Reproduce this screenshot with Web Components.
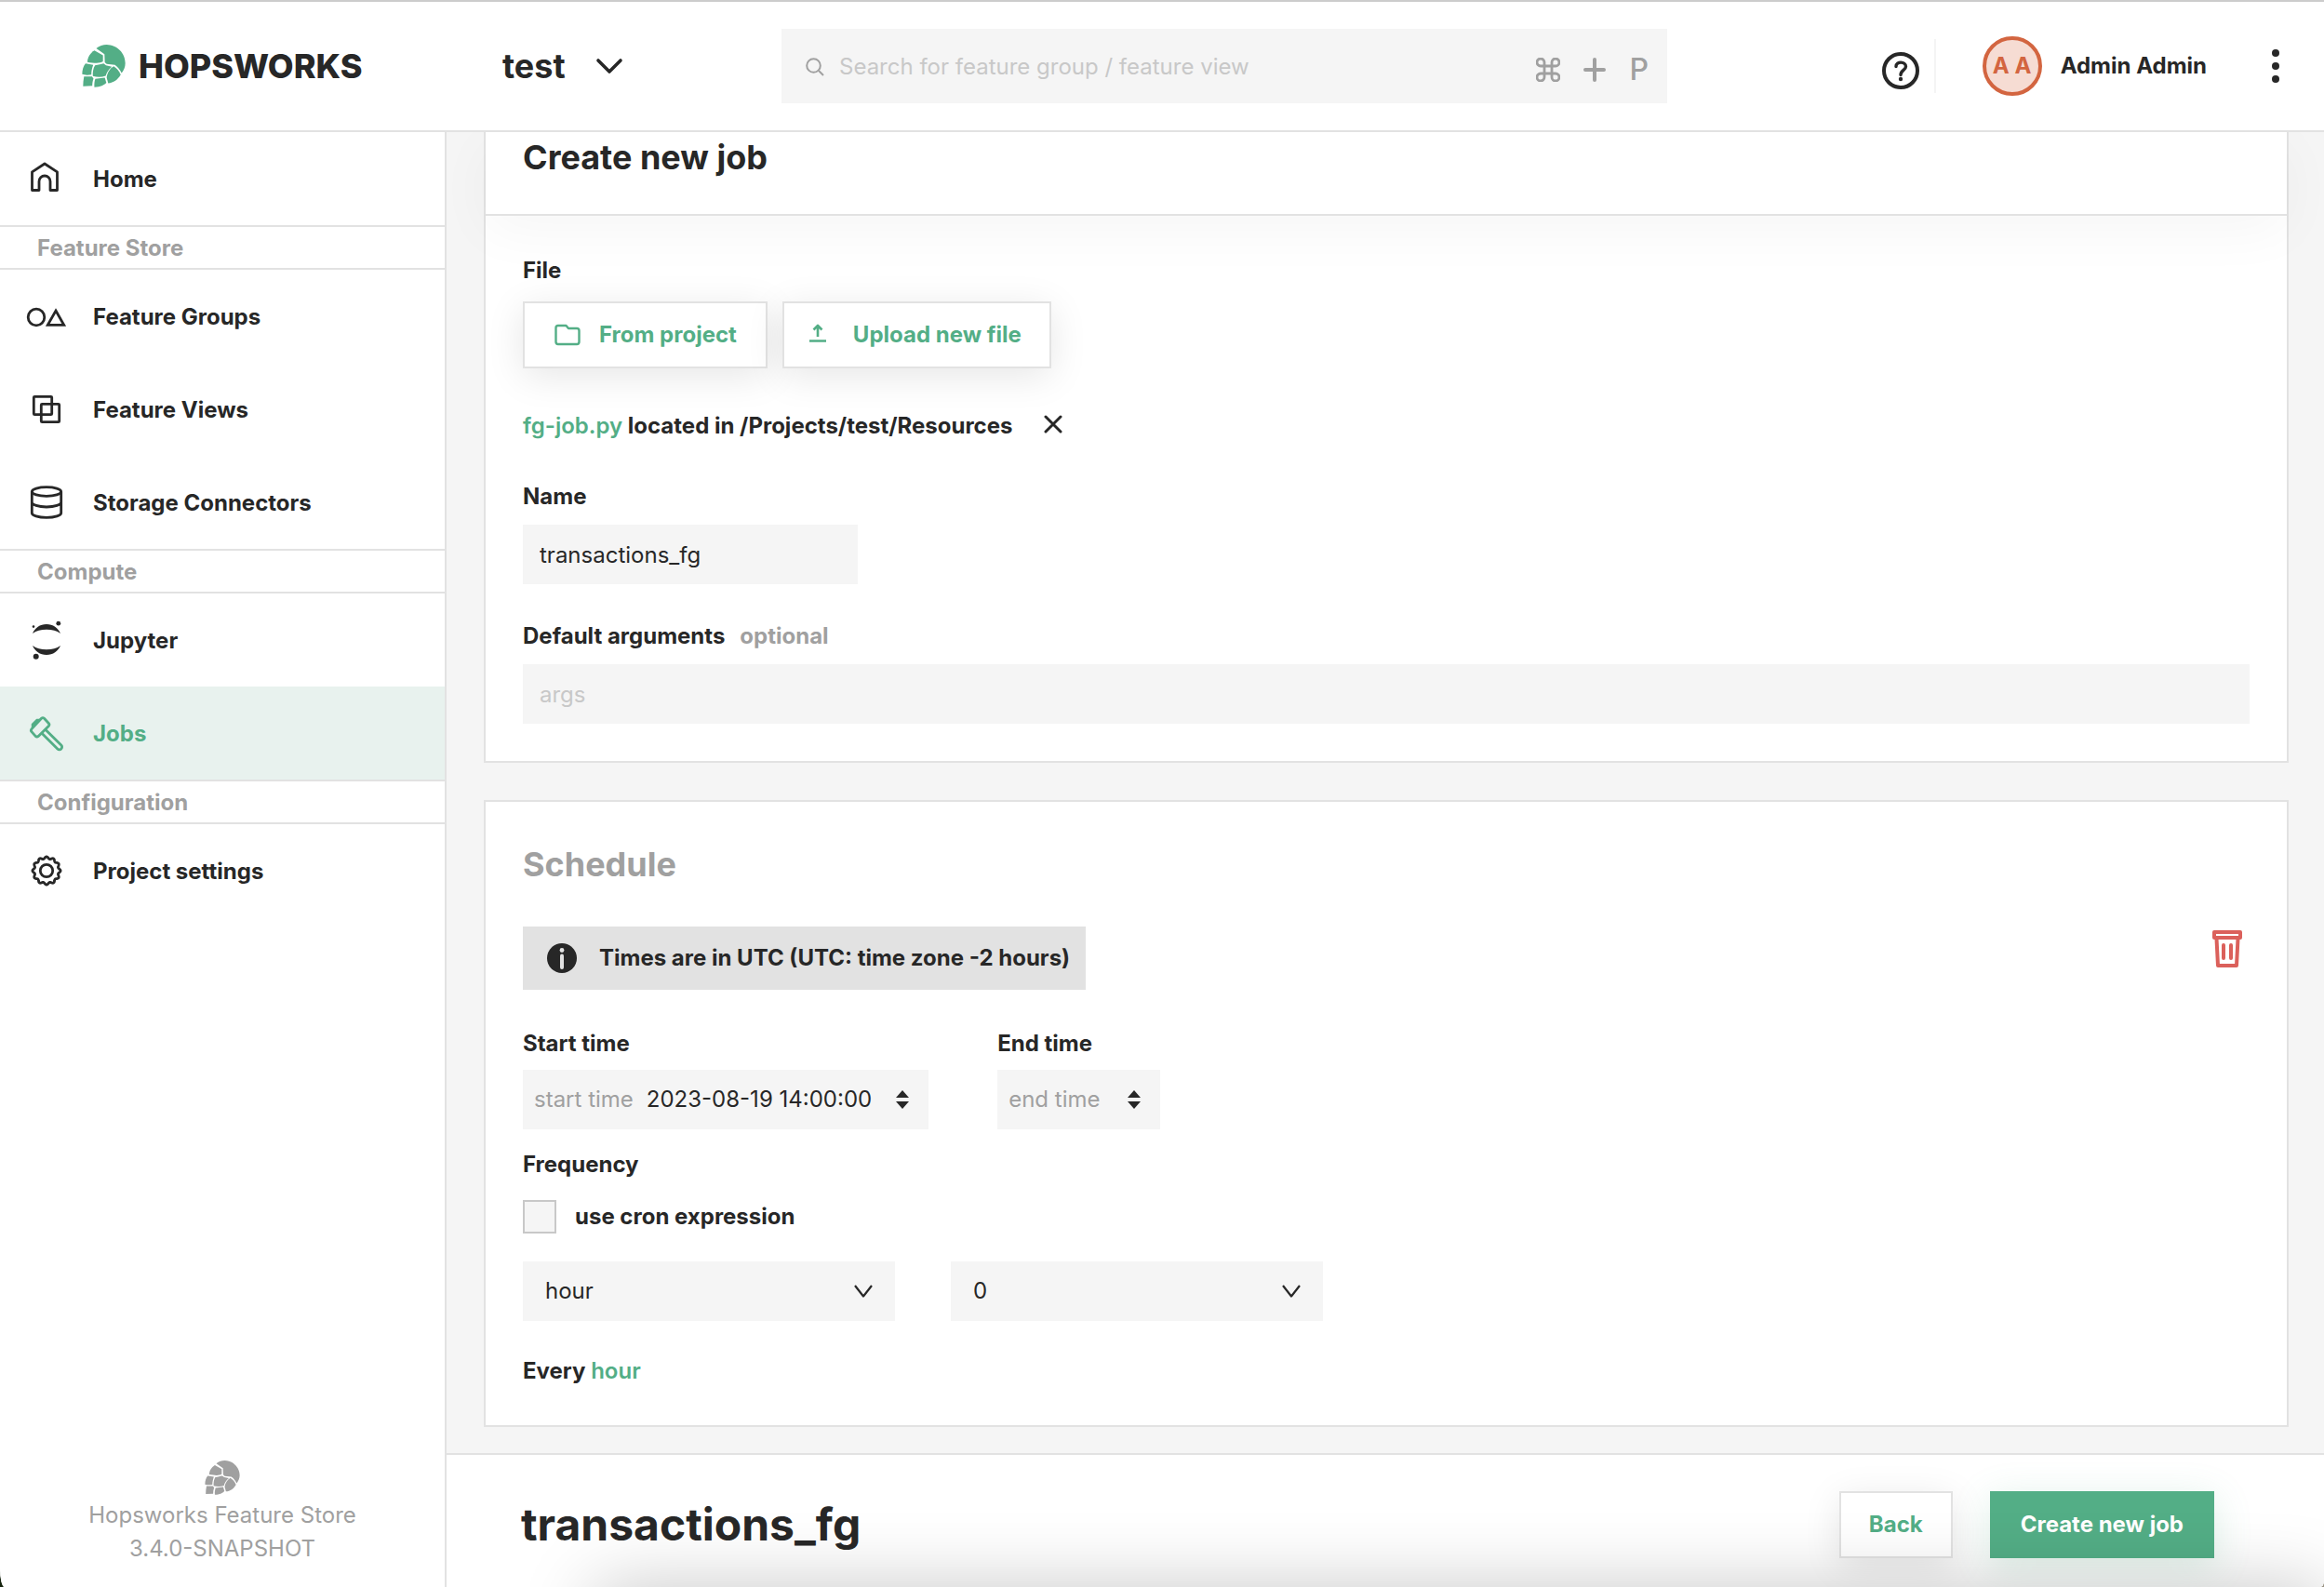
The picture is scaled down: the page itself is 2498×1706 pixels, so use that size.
<!DOCTYPE html>
<html lang="en">
<head>
<meta charset="utf-8">
<title>Hopsworks – Create new job</title>
<style>
  :root {
    --green: #53ae86;
    --ink: #272727;
    --grey: #a0a0a0;
    --pale: #c8c8c8;
    --line: #e2e2e2;
    --fill: #f5f5f5;
  }
  html { background: linear-gradient(90deg, #16240f 0 50%, #9a9484 50%); }
  body {
    margin: 0;
    font: 400 24px/28px Inter, "Liberation Sans", sans-serif;
    color: var(--ink);
  }
</style>
</head>
<body>
<hw-app>
  <hw-header slot="header" project="test" user="Admin Admin" initials="A A"></hw-header>
  <hw-sidebar slot="sidebar" product="Hopsworks Feature Store" version="3.4.0-SNAPSHOT">
    <hw-nav-item icon="home">Home</hw-nav-item>
    <hw-nav-section>Feature Store</hw-nav-section>
    <hw-nav-item icon="groups">Feature Groups</hw-nav-item>
    <hw-nav-item icon="views">Feature Views</hw-nav-item>
    <hw-nav-item icon="storage">Storage Connectors</hw-nav-item>
    <hw-nav-section>Compute</hw-nav-section>
    <hw-nav-item icon="jupyter">Jupyter</hw-nav-item>
    <hw-nav-item icon="hammer" active>Jobs</hw-nav-item>
    <hw-nav-section>Configuration</hw-nav-section>
    <hw-nav-item icon="gear">Project settings</hw-nav-item>
  </hw-sidebar>
  <hw-job-form></hw-job-form>
  <hw-schedule-form></hw-schedule-form>
  <hw-action-bar slot="footer" heading="transactions_fg">
    <hw-button variant="small">Back</hw-button>
    <hw-button variant="primary">Create new job</hw-button>
  </hw-action-bar>
</hw-app>

<script>
const hop = `
  <path d="M70 47C80 39 92 35 104 35C138 36 165 62 165 96C165 108 160 119 153 128C147 116 140 107 131 101L104 98L98 93L97 66Z"/>
  <path d="M64 54L92 70L92 90C82 98 60 95 41 92C41 78 50 62 64 54Z"/>
  <path d="M35 97L60 101C56 112 54 122 54 133C44 135 32 135 24 132C24 118 28 105 35 97Z"/>
  <path d="M66 103C77 102 87 98 94 97L102 103L121 107C110 116 104 126 101 137C88 142 73 142 59 138C58 126 60 112 66 103Z"/>
  <path d="M127 106C137 112 145 122 150 133C141 149 126 160 109 161L104 142C106 127 115 113 127 106Z"/>
  <path d="M30 139C39 140 48 139 56 139L61 146C58 154 57 162 57 170L27 171C27 160 28 149 30 139Z"/>
  <path d="M67 147L98 143L103 160C95 168 84 174 64 174C63 165 64 155 67 147Z"/>`;

/* Each icon: width, height, viewBox, shapes. */
const ICONS = {
  hop: [47, 46, '24 35 141 140', `<g fill="currentColor">${hop}</g>`],
  home: [48, 48, '0 1 48 48', `<path d="M8.500 36.500V16.800L22 8l13.500 8.800V36.500H28V27a6 6 0 0 0-12 0v9.500z"/>`],
  groups: [48, 48, '0 0 48 48', `<circle cx="13" cy="24" r="8.800"/><path d="M34 17L42.700 32.300H25.300z" stroke-linejoin="miter"/>`],
  views: [48, 48, '0 1 48 48', `<rect x="10.300" y="10.300" width="19.400" height="19.400" rx="1"/><rect x="18.300" y="18.300" width="19.400" height="19.400" rx="1"/>`],
  storage: [48, 48, '0 1 48 48', `<ellipse cx="24" cy="12.500" rx="15.700" ry="4.800"/><path d="M8.300 12.500V35.500C8.300 38 15 40.300 24 40.300S39.700 38 39.700 35.500V12.500M8.300 24C8.300 26.500 15 29 24 29S39.700 26.500 39.700 24"/>`],
  jupyter: [48, 48, '0 1 48 48', `<g fill="currentColor" stroke="none"><path d="M9 17C11.500 11 17 7 24 7s12.500 4 15 10C35 14 30 12.700 24 12.700S13 14 9 17z"/><path d="M9 30C11.500 36 17 40 24 40s12.500-4 15-10C35 33 30 34.300 24 34.300S13 33 9 30z"/><circle cx="36.800" cy="6.200" r="2.400"/><circle cx="10" cy="9.600" r="1.300"/><circle cx="12.700" cy="41.700" r="3"/></g>`],
  hammer: [48, 48, '1 1 48 48', `<path d="M19.500 8.300q1.500-1.300 3 0L27.300 13.500q1.300 1.500 0 3L16.200 27.400q-1.500 1.300-3 0L9 22.600q-1.300-1.500 0-3z"/><path d="M23.800 20.300L40.800 37a2.700 2.700 0 0 1-4 4L20 24.300"/><path d="M9.500 14.500L14.500 9.500h3l-8 8z" fill="currentColor" stroke-width="1.500"/>`],
  gear: [48, 48, '0 1 48 48', `<circle cx="24" cy="24" r="6.700"/>`],
  chevron: [30, 18, '0 0 30 18', `<path d="M3 3L15 15L27 3" stroke-width="3.600" stroke-linecap="round"/>`],
  caret: [20, 14, '0 0 20 14', `<path d="M1 1L10 12.500L19 1" stroke-width="2.200"/>`],
  search: [20, 20, '0 0 20 20', `<circle cx="8.500" cy="8.500" r="7.300" stroke-width="2"/><path d="M14 14L19 19" stroke-width="2"/>`],
  command: [26, 26, '0 0 26 26', `<path d="M9 9V5A4 4 0 1 0 5 9H21A4 4 0 1 0 17 5V21A4 4 0 1 0 21 17H5A4 4 0 1 0 9 21Z" stroke-width="2.800"/>`],
  plus: [24, 26, '0 0 24 26', `<path d="M12 2V24M2 13H22" stroke-width="4" stroke-linecap="round"/>`],
  help: [40, 40, '0 0 40 40', `<circle cx="20" cy="20" r="18" stroke-width="4"/><path d="M15 15.500C15 9.500 25.500 9.800 25.500 15.500C25.500 19.500 20 19.500 20 24.500" stroke-width="3.400" stroke-linecap="round"/><circle cx="20" cy="29" r="2.200" fill="currentColor" stroke="none"/>`],
  dots: [8, 36, '0 0 8 36', `<g fill="currentColor" stroke="none"><circle cx="4" cy="4" r="4"/><circle cx="4" cy="18" r="4"/><circle cx="4" cy="32" r="4"/></g>`],
  folder: [28, 24, '0 0 28 24', `<path d="M1.500 4.500V19.500Q1.500 22 4 22H24Q26.500 22 26.500 19.500V7.500Q26.500 5 24 5H15L12.500 2H4Q1.500 2 1.500 4.500Z" stroke-width="2.400"/>`],
  upload: [20, 24, '0 0 20 24', `<path d="M10 14V2.500M5.500 6.500L10 2L14.500 6.500M1 18.500H19" stroke-width="2.600"/>`],
  close: [20, 24, '0 0 20 24', `<path d="M2 2L18 18M18 2L2 18" stroke-width="3" stroke-linecap="round"/>`],
  info: [32, 32, '0 0 32 32', `<circle cx="16" cy="16" r="16" fill="currentColor" stroke="none"/><path d="M16 13.500V26" stroke="#e2e2e2" stroke-width="4" stroke-linecap="round"/><circle cx="16" cy="7.500" r="2.400" fill="#e2e2e2" stroke="none"/>`],
  sort: [14, 20, '0 0 14 20', `<path d="M7 0L14 8H0ZM7 20L0 12H14Z" fill="currentColor" stroke="none"/>`],
  trash: [32, 40, '0 0 32 40', `<g stroke-width="4"><path d="M2 2H30V8H2Z"/><path d="M4.500 9L6 38H26L27.500 9"/><path d="M12 16V30M20 16V30" stroke-linecap="round"/></g>`]
};

/* Twelve-lobed gear rim. */
(() => {
  let d = '';
  for (let i = 0; i <= 144; i++) {
    const a = i / 144 * Math.PI * 2 - Math.PI / 2;
    const r = 14 + Math.cos((a + Math.PI / 2) * 12) * 1.1;
    d += (i ? 'L' : 'M') + (24 + r * Math.cos(a)).toFixed(2) + ' ' + (24 + r * Math.sin(a)).toFixed(2);
  }
  ICONS.gear[3] += `<path d="${d}Z"/>`;
})();

const BASE = `
  :host, *, *::before, *::after { box-sizing: border-box; }
  :host { display: block; }
  button, input, select { font: inherit; color: inherit; border: 0; margin: 0; padding: 0; background: none; border-radius: 0; }
  button { cursor: pointer; }
  a { color: inherit; text-decoration: none; }
  h1, h2, p { margin: 0; }
  ::placeholder { color: var(--pale); opacity: 1; }
`;

class HwElement extends HTMLElement {
  connectedCallback() {
    if (this.shadowRoot) return;
    this.attachShadow({ mode: 'open' }).innerHTML =
      `<style>${BASE}${this.css()}</style>${this.html()}`;
  }
  at(name) { return this.getAttribute(name) || ''; }
  css() { return ''; }
  html() { return '<slot></slot>'; }
}
const define = (tag, cls) => customElements.define(tag, cls);

define('hw-icon', class extends HwElement {
  css() { return `:host { display: inline-flex; flex: none; } svg { display: block; }`; }
  html() {
    const [w, h, box, body] = ICONS[this.at('name')];
    const k = Number(this.at('scale')) || 1;
    const stroke = this.at('name') === 'hop' ? 'none' : 'currentColor';
    return `<svg width="${Math.round(w * k)}" height="${Math.round(h * k)}" viewBox="${box}" fill="none" stroke="${stroke}" stroke-width="2.800" stroke-linejoin="round" aria-hidden="true">${body}</svg>`;
  }
});

define('hw-app', class extends HwElement {
  css() { return `
    :host { display: grid; grid-template: auto minmax(0, 1fr) auto / 480px minmax(0, 1fr); height: 100vh; overflow: hidden; background: var(--fill); border-radius: 0 0 4px 5px / 0 0 6px 20px; }
    .top { grid-column: 1 / -1; }
    .side { grid-row: 2 / 4; display: grid; }
    main { overflow: hidden auto; padding: 0 38px 20px 40px; display: flex; flex-direction: column; gap: 40px; }`; }
  html() { return `
    <div class="top"><slot name="header"></slot></div>
    <div class="side"><slot name="sidebar"></slot></div>
    <main><slot></slot></main>
    <slot name="footer"></slot>`; }
});

define('hw-header', class extends HwElement {
  css() { return `
    header { display: flex; align-items: center; height: 142px; border-top: 2px solid #ccc; border-bottom: 2px solid var(--line); background: #fff; padding-right: 48px; }
    .brand { display: flex; align-items: center; gap: 14px; width: 540px; padding-left: 88px; flex: none; font-size: 36px; line-height: 44px; font-weight: 800; }
    .brand hw-icon { color: var(--green); }
    .project { display: flex; align-items: center; gap: 32px; width: 300px; flex: none; font-size: 36px; line-height: 44px; font-weight: 700; }
    .search { display: flex; align-items: center; gap: 16px; flex: 0 1 952px; height: 80px; padding: 1px 20px 0 26px; background: var(--fill); color: var(--grey); }
    input { flex: 1; min-width: 0; outline: 0; }
    .keys { display: flex; align-items: center; gap: 25px; margin-top: 6px; font-size: 32px; font-weight: 500; }
    .right { display: flex; align-items: center; margin-left: auto; }
    .help { margin-top: 10px; display: flex; }
    .rule { width: 2px; height: 58px; background: #f4f4f4; margin: 0 50px 0 16px; }
    .avatar { display: grid; place-items: center; width: 64px; height: 64px; border: 4px solid #d36540; border-radius: 50%; background: #f6dcd3; color: #d36540; font-weight: 700; }
    .user { margin: 0 70px 0 20px; font-weight: 700; }
    .more { display: flex; }`; }
  html() { return `
    <header>
      <a class="brand" href="#"><hw-icon name="hop"></hw-icon><span>HOPSWORKS</span></a>
      <button class="project" type="button"><span>${this.at('project')}</span><hw-icon name="chevron"></hw-icon></button>
      <label class="search">
        <hw-icon name="search"></hw-icon>
        <input type="text" placeholder="Search for feature group / feature view" aria-label="Search">
        <span class="keys"><hw-icon name="command"></hw-icon><hw-icon name="plus"></hw-icon><span>P</span></span>
      </label>
      <div class="right">
        <button class="help" type="button" aria-label="Help"><hw-icon name="help"></hw-icon></button>
        <span class="rule"></span>
        <span class="avatar">${this.at('initials')}</span>
        <span class="user">${this.at('user')}</span>
        <button class="more" type="button" aria-label="More"><hw-icon name="dots"></hw-icon></button>
      </div>
    </header>`; }
});

define('hw-sidebar', class extends HwElement {
  css() { return `
    :host { display: flex; flex-direction: column; background: #fff; border-right: 2px solid var(--line); }
    footer { display: flex; flex-direction: column; align-items: center; margin-top: auto; padding-bottom: 23px; line-height: 36px; color: var(--grey); }
    hw-icon { margin-bottom: 4px; }`; }
  html() { return `
    <nav><slot></slot></nav>
    <footer><hw-icon name="hop" scale="0.8"></hw-icon><span>${this.at('product')}</span><span>${this.at('version')}</span></footer>`; }
});

define('hw-nav-section', class extends HwElement {
  css() { return `:host { padding: 9px 40px 7px; border: solid var(--line); border-width: 2px 0; color: var(--grey); font-weight: 700; }`; }
});

define('hw-nav-item', class extends HwElement {
  css() { return `
    a { display: flex; align-items: center; gap: 26px; height: 100px; padding: 1px 0 0 26px; font-weight: 700; }
    :host([active]) a { background: #e8f2ee; color: var(--green); }`; }
  html() { return `<a href="#"><hw-icon name="${this.at('icon')}"></hw-icon><slot></slot></a>`; }
});

define('hw-button', class extends HwElement {
  css() { return `
    button { display: flex; align-items: center; justify-content: center; gap: 20px; height: 72px; padding: 0 31px 0 32px; border: 2px solid var(--line); background: #fff; color: var(--green); font-weight: 700; white-space: nowrap; box-shadow: 0 8px 40px rgba(0, 0, 0, .1); }
    :host([variant=small]) button { padding: 0 30px; }
    :host([variant=upload]) button { gap: 28px; padding: 0 30px 0 26px; }
    :host([variant=primary]) button { padding: 0 31px; background: var(--green); border-color: var(--green); color: #fff; box-shadow: 0 8px 40px rgba(83, 174, 134, .2); }`; }
  html() { return `<button type="button">${this.at('icon') ? `<hw-icon name="${this.at('icon')}"></hw-icon>` : ''}<slot></slot></button>`; }
});

define('hw-text-field', class extends HwElement {
  css() { return `
    :host { display: flex; flex-direction: column; gap: 16px; }
    label { font-weight: 700; }
    .hint { margin-left: 16px; color: var(--grey); font-weight: 700; }
    input { width: 100%; height: 64px; padding: 0 18px; background: var(--fill); outline: 0; }
    :host([narrow]) input { max-width: 360px; }`; }
  html() { return `
    <label for="box">${this.at('label')}${this.at('hint') ? `<span class="hint">${this.at('hint')}</span>` : ''}</label>
    <input id="box" type="text" value="${this.at('value')}" placeholder="${this.at('placeholder')}">`; }
});

define('hw-time-field', class extends HwElement {
  css() { return `
    :host { display: flex; flex-direction: column; align-items: flex-start; gap: 14px; }
    label { font-weight: 700; }
    button { display: flex; align-items: center; height: 64px; padding: 0 21px 0 12px; background: var(--fill); white-space: nowrap; }
    .prefix { margin-right: 14px; color: var(--grey); }
    .value { margin-right: 26px; }
    .value:empty { margin-right: 16px; }`; }
  html() { return `
    <label for="time">${this.at('label')}</label>
    <button id="time" type="button"><span class="prefix">${this.at('prefix')}</span><span class="value">${this.at('value')}</span><hw-icon name="sort"></hw-icon></button>`; }
});

define('hw-select', class extends HwElement {
  css() { return `
    :host { display: grid; align-items: center; flex: 0 1 400px; }
    select, hw-icon { grid-area: 1 / 1; }
    select { appearance: none; width: 100%; height: 64px; padding: 0 24px; background: var(--fill); }
    hw-icon { justify-self: end; margin-right: 24px; pointer-events: none; }`; }
  html() { return `<select aria-label="${this.at('label')}"><option>${this.at('value')}</option></select><hw-icon name="caret"></hw-icon>`; }
});

define('hw-job-form', class extends HwElement {
  css() { return `
    :host { border: 2px solid var(--line); border-top: 0; background: #fff; }
    .head { padding: 4px 40px 38px; border-bottom: 2px solid var(--line); box-shadow: 0 16px 60px rgba(0, 0, 0, .04); }
    h1 { font-size: 36px; line-height: 46px; font-weight: 700; }
    .body { padding: 45px 40px 40px; display: flex; flex-direction: column; }
    .label { font-weight: 700; margin-bottom: 19px; }
    .buttons { display: flex; gap: 16px; }
    .file { display: flex; align-items: center; gap: 34px; margin: 48px 0; font-weight: 700; }
    .file a { color: var(--green); font-weight: 600; }
    .file button { display: flex; }
    hw-text-field + hw-text-field { margin-top: 42px; }`; }
  html() { return `
    <div class="head"><h1>Create new job</h1></div>
    <div class="body">
      <p class="label">File</p>
      <div class="buttons"><hw-button icon="folder">From project</hw-button><hw-button icon="upload" variant="upload">Upload new file</hw-button></div>
      <div class="file"><p><a href="#">fg-job.py</a> located in /Projects/test/Resources</p><button type="button" aria-label="Remove file"><hw-icon name="close"></hw-icon></button></div>
      <hw-text-field narrow label="Name" value="transactions_fg"></hw-text-field>
      <hw-text-field label="Default arguments" hint="optional" placeholder="args"></hw-text-field>
    </div>`; }
});

define('hw-schedule-form', class extends HwElement {
  css() { return `
    :host { border: 2px solid var(--line); background: #fff; padding: 44px 40px; }
    h2 { font-size: 36px; line-height: 46px; font-weight: 700; color: var(--grey); margin-bottom: 44px; }
    .row { display: flex; }
    .notice { justify-content: space-between; align-items: flex-start; margin-bottom: 44px; }
    .info { display: flex; align-items: center; gap: 24px; height: 68px; padding: 0 17px 0 26px; background: #e2e2e2; font-weight: 700; }
    .trash { display: flex; padding: 4px 8px; color: #db605b; }
    .times { gap: 74px; margin-bottom: 24px; }
    .label { font-weight: 700; margin-bottom: 24px; }
    .cron { display: flex; align-items: center; gap: 20px; font-weight: 700; margin-bottom: 30px; }
    .cron input { appearance: none; width: 36px; height: 36px; border: 2px solid #c8c8c8; background: var(--fill); }
    .selects { gap: 60px; margin-bottom: 40px; }
    .every { font-weight: 700; }
    .every span { color: var(--green); font-weight: 600; }`; }
  html() { return `
    <h2>Schedule</h2>
    <div class="row notice">
      <div class="info"><hw-icon name="info"></hw-icon><span>Times are in UTC (UTC: time zone -2 hours)</span></div>
      <button class="trash" type="button" aria-label="Delete schedule"><hw-icon name="trash"></hw-icon></button>
    </div>
    <div class="row times">
      <hw-time-field label="Start time" prefix="start time" value="2023-08-19 14:00:00"></hw-time-field>
      <hw-time-field label="End time" prefix="end time"></hw-time-field>
    </div>
    <p class="label">Frequency</p>
    <label class="cron"><input type="checkbox">use cron expression</label>
    <div class="row selects"><hw-select label="Unit" value="hour"></hw-select><hw-select label="Minute" value="0"></hw-select></div>
    <p class="every">Every <span>hour</span></p>`; }
});

define('hw-action-bar', class extends HwElement {
  css() { return `
    :host { position: relative; overflow: hidden; display: flex; align-items: center; justify-content: space-between; height: 144px; padding: 8px 118px 0 80px; border-top: 2px solid var(--line); background: #fff; }
    :host::after { content: ""; position: absolute; top: 100%; left: 160px; right: 0; height: 120px; box-shadow: 0 0 80px rgba(0, 0, 0, .22); pointer-events: none; }
    h2 { font-size: 48px; line-height: 58px; font-weight: 700; }
    .actions { display: flex; gap: 40px; }`; }
  html() { return `<h2>${this.at('heading')}</h2><div class="actions"><slot></slot></div>`; }
});
</script>
</body>
</html>
